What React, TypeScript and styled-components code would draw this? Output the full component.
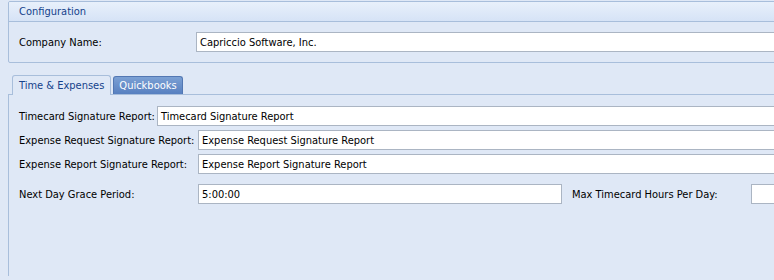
import React from 'react';
import styled, { createGlobalStyle } from 'styled-components';

const GlobalStyle = createGlobalStyle`
  html, body {
    margin: 0;
    padding: 0;
    background: #dfe8f6;
    overflow: hidden;
  }
  body {
    font-family: "DejaVu Sans Condensed", "Liberation Sans", sans-serif;
    font-size: 11px;
    color: #000;
  }
`;

const Page = styled.div`
  width: 100%;
  height: 280px;
  padding: 1px 0 0 8px;
  box-sizing: border-box;
  overflow: hidden;
`;

// right edges of the boxes sit past the window, as in the screenshot
const GroupBox = styled.div`
  margin-right: -20px;
  border: 1px solid #a8bedb;
  border-radius: 2px;
  background: #dfe8f6;
  overflow: hidden;
`;

const GroupHeader = styled.div`
  height: 19px;
  padding-left: 10px;
  display: flex;
  align-items: center;
  color: #15428b;
  background: linear-gradient(#e8f0fb, #d6e3f6);
  border-bottom: 1px solid #a8bedb;
`;

const GroupBody = styled.div`
  padding: 10px 0 10px 10px;
`;

const Row = styled.div<{ $gap?: number }>`
  display: flex;
  align-items: center;
  margin-top: ${(p) => p.$gap ?? 0}px;
`;

const Label = styled.div<{ $width?: number; $indent?: number }>`
  width: ${(p) => (p.$width ? `${p.$width}px` : 'auto')};
  padding-right: ${(p) => (p.$width ? 0 : 2)}px;
  margin-left: ${(p) => p.$indent ?? 0}px;
  flex-shrink: 0;
  white-space: nowrap;
`;

const Input = styled.div<{ $width?: number }>`
  height: 18px;
  width: ${(p) => (p.$width ? `${p.$width - 5}px` : '900px')};
  flex-shrink: 0;
  border: 1px solid #abb5c3;
  background: #fff;
  padding-left: 3px;
  box-sizing: content-box;
  display: flex;
  align-items: center;
  white-space: nowrap;
`;

const TabStrip = styled.div`
  display: flex;
  align-items: flex-end;
  gap: 2px;
  margin-top: 12px;
  padding-left: 4px;
  height: 19px;
  position: relative;
  z-index: 1;
`;

const Tab = styled.div<{ $active?: boolean }>`
  height: ${(p) => (p.$active ? 20 : 18)}px;
  padding: 0 ${(p) => (p.$active ? 6 : 5)}px;
  display: flex;
  align-items: center;
  border: 1px solid ${(p) => (p.$active ? '#a8bedb' : '#5277b3')};
  border-bottom: none;
  border-radius: 3px 3px 0 0;
  box-sizing: border-box;
  color: ${(p) => (p.$active ? '#15428b' : '#ffffff')};
  background: ${(p) =>
    p.$active ? '#dfe8f6' : 'linear-gradient(#7ba0d4, #5880c0)'};
  margin-bottom: ${(p) => (p.$active ? -1 : 0)}px;
`;

const TabPanel = styled.div`
  margin-right: -20px;
  border-top: 1px solid #a8bedb;
  border-left: 1px solid #a8bedb;
  padding: 11px 0 0 10px;
  height: 170px;
  overflow: hidden;
`;

const App: React.FC = () => {
  return (
    <Page>
      <GlobalStyle />
      <GroupBox>
        <GroupHeader>Configuration</GroupHeader>
        <GroupBody>
          <Row>
            <Label $width={177}>Company Name:</Label>
            <Input>Capriccio Software, Inc.</Input>
          </Row>
        </GroupBody>
      </GroupBox>

      <TabStrip>
        <Tab $active>Time &amp; Expenses</Tab>
        <Tab>Quickbooks</Tab>
      </TabStrip>
      <TabPanel>
        <Row>
          <Label>Timecard Signature Report:</Label>
          <Input>Timecard Signature Report</Input>
        </Row>
        <Row $gap={4}>
          <Label $width={179}>Expense Request Signature Report:</Label>
          <Input>Expense Request Signature Report</Input>
        </Row>
        <Row $gap={4}>
          <Label $width={179}>Expense Report Signature Report:</Label>
          <Input>Expense Report Signature Report</Input>
        </Row>
        <Row $gap={10}>
          <Label $width={179}>Next Day Grace Period:</Label>
          <Input $width={364}>5:00:00</Input>
          <Label $width={179} $indent={10}>
            Max Timecard Hours Per Day:
          </Label>
          <Input />
        </Row>
      </TabPanel>
    </Page>
  );
};

export default App;
